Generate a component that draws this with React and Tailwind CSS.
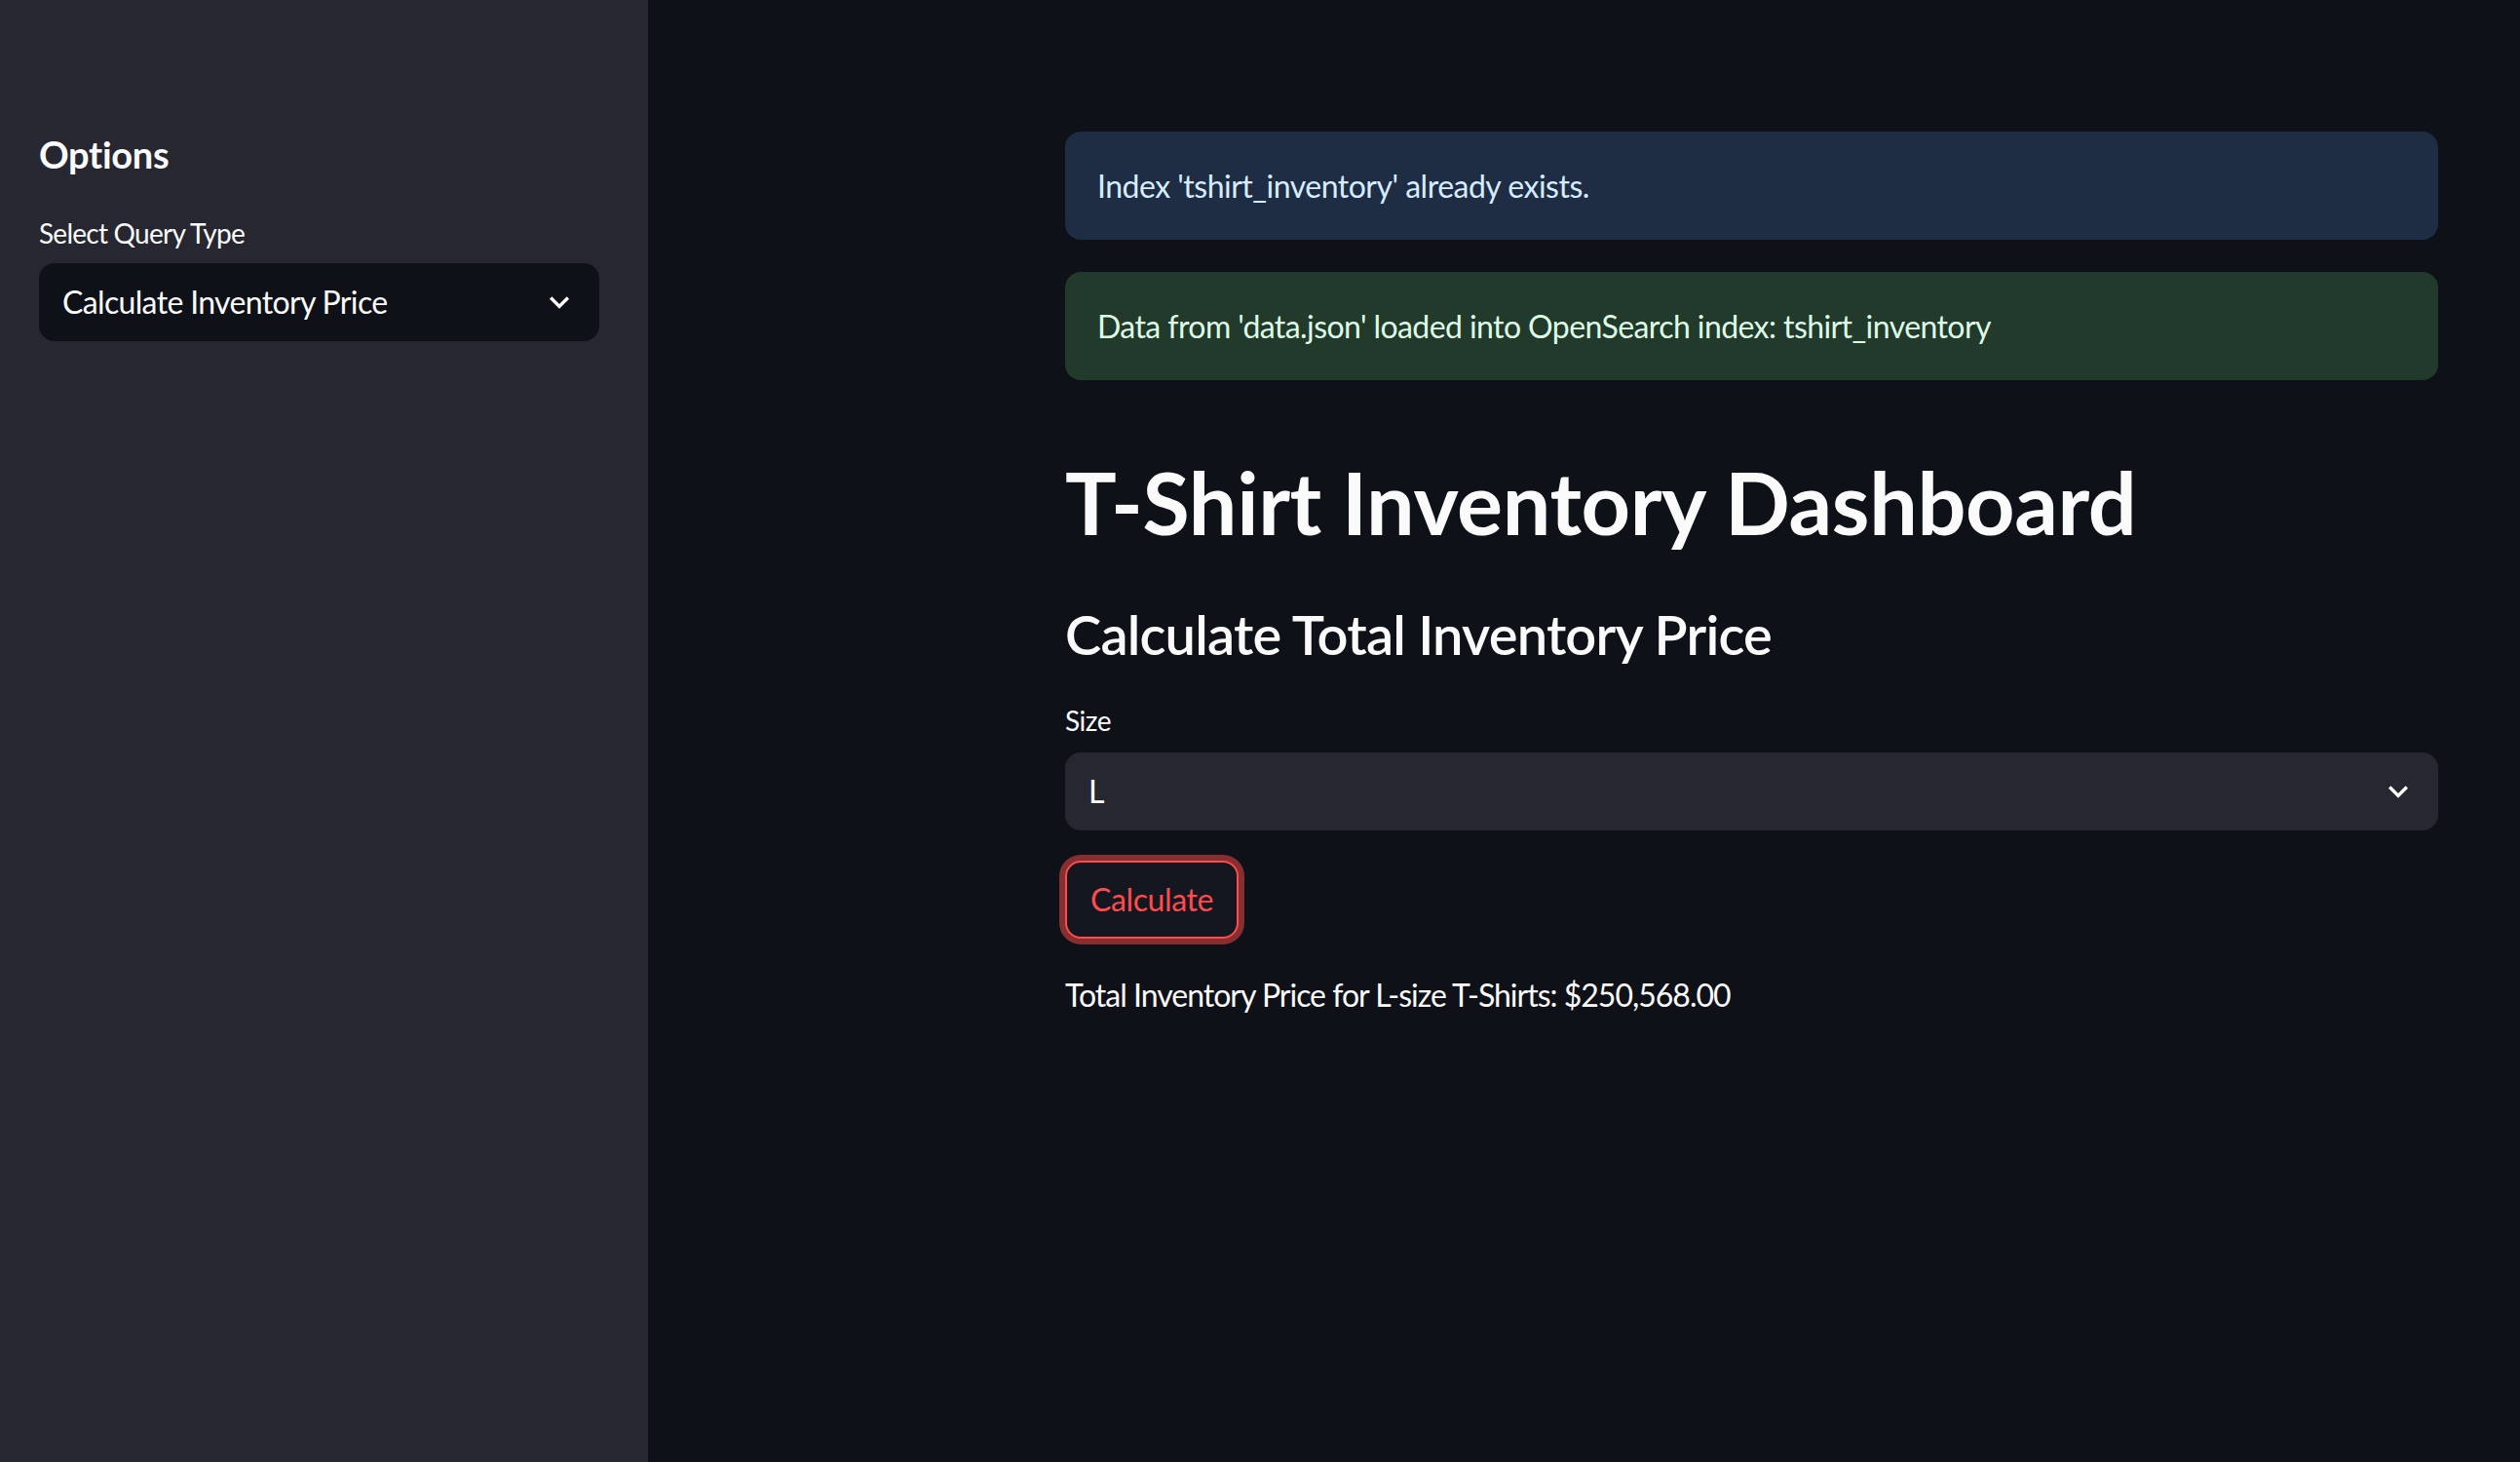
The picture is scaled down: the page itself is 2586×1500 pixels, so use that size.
import { useState } from 'react';

const font = { fontFamily: 'Lato, "Noto Sans", sans-serif' };

function Chevron({ className = '' }) {
  return (
    <svg viewBox="0 0 24 24" className={`h-[40px] w-[40px] fill-white ${className}`}>
      <path d="M16.59 8.59L12 13.17 7.41 8.59 6 10l6 6 6-6z" />
    </svg>
  );
}

function SelectBox({ value, dark }) {
  return (
    <div
      className={`flex h-[80px] items-center justify-between rounded-[16px] pl-[24px] pr-[21px] ${
        dark ? 'bg-[#0e1117]' : 'bg-[#262730]'
      }`}
    >
      <span className="text-[32px] leading-[40px] tracking-[-0.65px] text-[#fafafa]">{value}</span>
      <Chevron />
    </div>
  );
}

export default function App() {
  const [size] = useState('L');

  return (
    <div style={font} className="flex min-h-[1500px] w-full bg-[#0e1117] text-[#fafafa]">
      <aside className="w-[665px] shrink-0 bg-[#262730] pl-[40px] pr-[50px] pt-[134px]">
        <h2 className="text-[38px] font-bold leading-[48px] tracking-[-0.3px]">Options</h2>
        <label className="mt-[37px] block text-[28px] leading-[40px] tracking-[-0.75px]">
          Select Query Type
        </label>
        <div className="mt-[11px]">
          <SelectBox value="Calculate Inventory Price" dark />
        </div>
      </aside>

      <main className="flex-1 pl-[428px] pt-[135px]">
        <div className="flex w-[1409px] flex-col">
          <div className="rounded-[16px] bg-[#1e2c44] px-[33px] py-[30px] text-[32px] leading-[51px] tracking-[-0.5px] text-[#d6ecff]">
            Index 'tshirt_inventory' already exists.
          </div>
          <div className="mt-[33px] rounded-[16px] bg-[#213a2b] px-[33px] py-[30px] text-[32px] leading-[51px] tracking-[-0.58px] text-[#dffbe6]">
            Data from 'data.json' loaded into OpenSearch index: tshirt_inventory
          </div>

          <h1 className="mt-[72px] text-[88px] font-bold leading-[106px] tracking-[-0.35px]">
            T-Shirt Inventory Dashboard
          </h1>
          <h3 className="mt-[49px] text-[56px] font-semibold leading-[67px] tracking-[-0.8px]">
            Calculate Total Inventory Price
          </h3>

          <label className="mt-[35px] block text-[28px] leading-[40px] tracking-[-0.5px]">Size</label>
          <div className="mt-[13px]">
            <SelectBox value={size} />
          </div>

          <div className="mt-[31px]">
            <button className="h-[80px] w-[178px] rounded-[16px] border-2 border-[#ff4b4b] bg-[#141720] text-[32px] tracking-[-0.4px] text-[#ff4b4b] shadow-[0_0_0_6px_rgba(255,75,75,0.5)]">
              Calculate
            </button>
          </div>

          <p className="mt-[32px] text-[32px] leading-[51px] tracking-[-1px]">
            Total Inventory Price for L-size T-Shirts: $250,568.00
          </p>
        </div>
      </main>
    </div>
  );
}
